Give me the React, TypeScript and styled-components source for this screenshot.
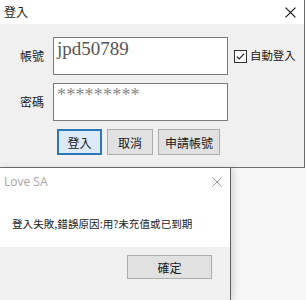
import React from "react";
import styled, { createGlobalStyle } from "styled-components";

const Global = createGlobalStyle`
  html, body { margin: 0; padding: 0; }
  body {
    background: #f6f6f6;
    font-family: "Noto Sans CJK TC", "Noto Sans", sans-serif;
    width: 306px;
    height: 300px;
    overflow: hidden;
  }
`;

const Page = styled.div`
  display: flex;
  flex-direction: column;
  width: 306px;
  height: 300px;
`;

const LoginWindow = styled.div`
  width: 304px;
  height: 167px;
  background: #f0f0f0;
  border-right: 1px solid #6f6f6f;
  border-bottom: 1px solid #6f6f6f;
  display: flex;
  flex-direction: column;
`;

const TitleBar = styled.div<{ $h: number }>`
  height: ${(p) => p.$h}px;
  background: #ffffff;
  display: flex;
  align-items: center;
  justify-content: space-between;
  padding: 0 8px 0 4px;
  flex-shrink: 0;
`;

const TitleText = styled.span<{ $inactive?: boolean }>`
  font-size: 12px;
  line-height: 1;
  color: ${(p) => (p.$inactive ? "#a6a6a6" : "#1a1a1a")};
  font-family: ${(p) =>
    p.$inactive
      ? '"Open Sans", "Noto Sans", sans-serif'
      : '"Noto Sans CJK TC", sans-serif'};
`;

const FormBody = styled.div`
  padding: 13px 0 0 20px;
  display: grid;
  grid-template-columns: 33px 175px auto;
  row-gap: 8px;
  align-items: center;
`;

const Label = styled.span`
  font-size: 12px;
  color: #1a1a1a;
  line-height: 1;
`;

const TextBox = styled.div`
  height: 36px;
  background: #ffffff;
  border: 1px solid #7a7a7a;
  padding: 0 0 0 3px;
  font-family: "Liberation Serif", serif;
  font-size: 19px;
  line-height: 22px;
  color: #555;
  overflow: hidden;
`;

const Stars = styled.span`
  font-size: 18px;
  letter-spacing: 0.2px;
  color: #888;
`;

const CheckWrap = styled.label`
  display: flex;
  align-items: center;
  gap: 3px;
  margin-left: 6px;
  font-size: 11.4px;
  color: #1a1a1a;
  line-height: 1;
`;

const ButtonRow = styled.div`
  grid-column: 2 / 4;
  display: flex;
  gap: 5px;
  margin-left: 4px;
`;

const Btn = styled.div<{ $w: number; $focus?: boolean }>`
  width: ${(p) => p.$w}px;
  height: 26px;
  box-sizing: border-box;
  display: flex;
  align-items: center;
  justify-content: center;
  font-size: 12px;
  color: #1a1a1a;
  background: ${(p) => (p.$focus ? "#dcebf7" : "#e1e1e1")};
  border: ${(p) => (p.$focus ? "2px solid #2f78b8" : "1px solid #adadad")};
`;

const LowerRow = styled.div`
  display: flex;
  flex: 1;
`;

const Dialog = styled.div`
  width: 230px;
  height: 132px;
  background: #ffffff;
  border-right: 1px solid #5f5f5f;
  display: flex;
  flex-direction: column;
  box-shadow: 3px 0 6px rgba(0, 0, 0, 0.12);
`;

const Message = styled.div`
  flex: 1;
  padding: 21px 0 0 12px;
  font-size: 10.6px;
  color: #1a1a1a;
  line-height: 1.3;
`;

const Footer = styled.div`
  height: 45px;
  background: #f0f0f0;
  display: flex;
  justify-content: flex-end;
  align-items: flex-start;
  padding: 8px 18px 0 0;
`;

const OkButton = styled.div`
  width: 85px;
  height: 24px;
  box-sizing: border-box;
  background: #e1e1e1;
  border: 1px solid #adadad;
  display: flex;
  align-items: center;
  justify-content: center;
  font-size: 12px;
  color: #1a1a1a;
`;

const CloseIcon = ({ color, size }: { color: string; size: number }) => (
  <svg width={size} height={size} viewBox="0 0 10 10">
    <path d="M0.5 0.5 L9.5 9.5 M9.5 0.5 L0.5 9.5" stroke={color} strokeWidth="1" />
  </svg>
);

const CheckIcon = () => (
  <svg width="13" height="13" viewBox="0 0 13 13">
    <rect x="0.5" y="0.5" width="12" height="12" fill="#fff" stroke="#333" />
    <path d="M2.8 6.6 L5.2 9 L10.2 3.6" fill="none" stroke="#222" strokeWidth="1.2" />
  </svg>
);

export default function App() {
  return (
    <Page>
      <Global />
      <LoginWindow>
        <TitleBar $h={24}>
          <TitleText>登入</TitleText>
          <CloseIcon color="#111" size={11} />
        </TitleBar>
        <FormBody>
          <Label>帳號</Label>
          <TextBox>jpd50789</TextBox>
          <CheckWrap>
            <CheckIcon />
            自動登入
          </CheckWrap>
          <Label>密碼</Label>
          <TextBox>
            <Stars>*********</Stars>
          </TextBox>
          <span />
          <ButtonRow>
            <Btn $w={45} $focus>
              登入
            </Btn>
            <Btn $w={46}>取消</Btn>
            <Btn $w={62}>申請帳號</Btn>
          </ButtonRow>
        </FormBody>
      </LoginWindow>
      <LowerRow>
        <Dialog>
          <TitleBar $h={28}>
            <TitleText $inactive>Love SA</TitleText>
            <CloseIcon color="#9a9a9a" size={10} />
          </TitleBar>
          <Message>登入失敗,錯誤原因:用?未充值或已到期</Message>
          <Footer>
            <OkButton>確定</OkButton>
          </Footer>
        </Dialog>
      </LowerRow>
    </Page>
  );
}
